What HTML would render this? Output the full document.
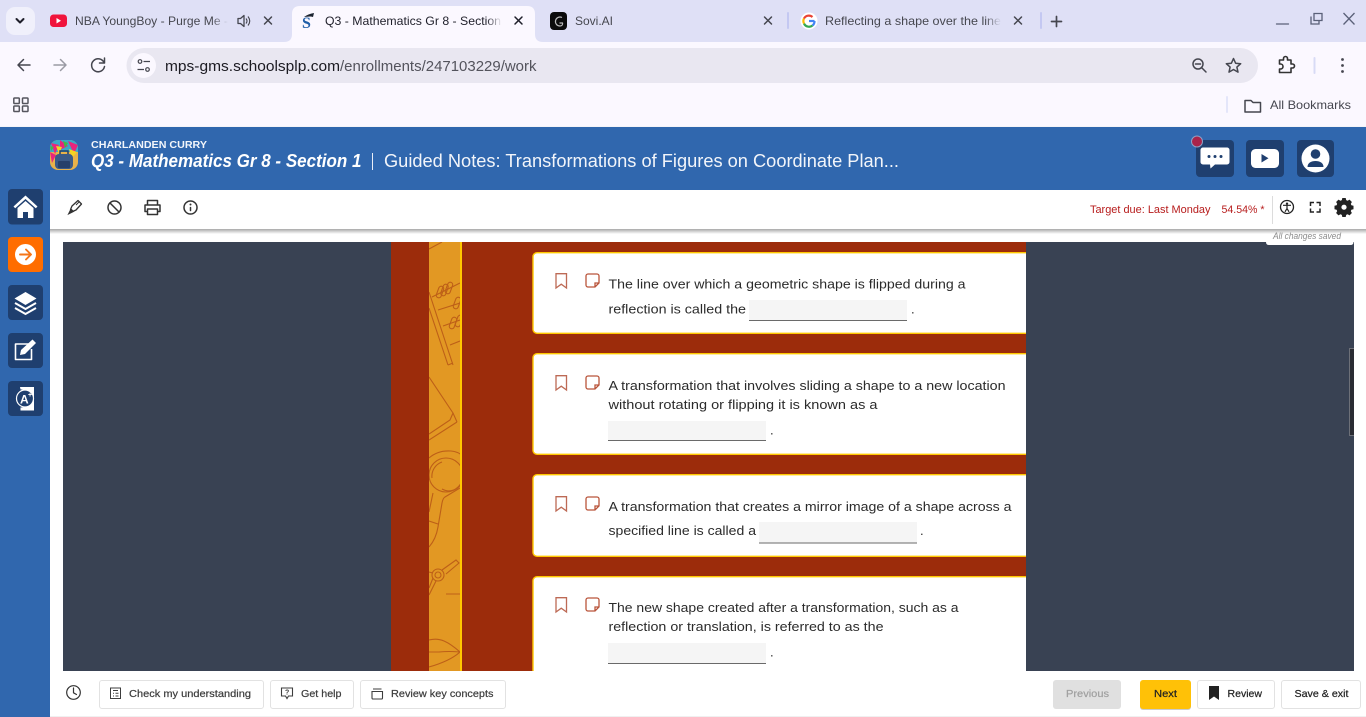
<!DOCTYPE html>
<html lang="en"><head><meta charset="utf-8"><title>Q3 - Mathematics Gr 8 - Section 1</title>
<style>
html,body{margin:0;padding:0;width:1366px;height:717px;overflow:hidden;background:#fff}
svg{display:block;position:absolute;left:0;top:0}
text{font-family:"Liberation Sans",Arial,sans-serif;white-space:pre}
.tab{font-size:12px;fill:#46474f}
.card{font-size:13px;fill:#2b2b2b}
.btn{font-size:10.5px;fill:#3d3d3d;stroke:#3d3d3d;stroke-width:.22}
.ic{fill:none;stroke:#45464f;stroke-width:1.5;stroke-linecap:round;stroke-linejoin:round}
.tb{fill:none;stroke:#333;stroke-width:1.5;stroke-linecap:round;stroke-linejoin:round}
.bb{fill:#fff;stroke:#e2e2e2;stroke-width:1}
.dec{fill:none;stroke:#bd5f18;stroke-width:1.100}
.bm{fill:none;stroke:#bd6a55;stroke-width:1.3}
.nt{fill:none;stroke:#b9543a;stroke-width:1.3}
.blank{fill:#f5f5f5}
.bl{stroke:#6a6a6a;stroke-width:1}
</style></head><body>
<svg width="1366" height="717" viewBox="0 0 1366 717" xmlns="http://www.w3.org/2000/svg">
<defs>
<linearGradient id="f1" x1="0" x2="1" y1="0" y2="0"><stop offset="0" stop-color="#dfe0f6" stop-opacity="0"/><stop offset="1" stop-color="#dfe0f6"/></linearGradient>
<linearGradient id="f2" x1="0" x2="1" y1="0" y2="0"><stop offset="0" stop-color="#fbf8ff" stop-opacity="0"/><stop offset="1" stop-color="#fbf8ff"/></linearGradient>
<linearGradient id="sh" x1="0" x2="0" y1="0" y2="1"><stop offset="0" stop-color="#a8a8a8"/><stop offset="1" stop-color="#fff"/></linearGradient>
<clipPath id="strip"><rect x="429" y="242" width="31" height="429"/></clipPath>
<clipPath id="av"><rect x="50" y="140" width="28" height="30" rx="8"/></clipPath>
</defs>

<!-- browser chrome -->
<rect width="1366" height="42" fill="#dfe0f6"/>
<rect y="42" width="1366" height="85" fill="#fbf8ff"/>
<rect x="6" y="7" width="29" height="28" rx="9" fill="#f0f0fb"/>
<path d="M16.500 19l3.500 3.500 3.500-3.500" fill="none" stroke="#1f1f2a" stroke-width="2" stroke-linecap="round" stroke-linejoin="round"/>
<rect x="50" y="14.500" width="17" height="12.500" rx="3.500" fill="#f0143c"/>
<path d="M56.500 18v5.500l4.500-2.750z" fill="#fff"/>
<text class="tab" x="75" y="25" textLength="153" lengthAdjust="spacingAndGlyphs">NBA YoungBoy - Purge Me -</text>
<rect x="212" y="10" width="16" height="22" fill="url(#f1)"/>
<path d="M238 18.500h2.500l3.500-3v11l-3.500-3H238z" fill="none" stroke="#45464f" stroke-width="1.300" stroke-linejoin="round"/>
<path d="M246 18.500q2 2.500 0 5M248 16.500q3.500 4.500 0 9" fill="none" stroke="#45464f" stroke-width="1.100"/>
<path d="M264.500 17l7 7M271.500 17l-7 7" class="ic"/>

<path d="M284 42Q292 42 292 34V14Q292 6 300 6H527Q535 6 535 14V34Q535 42 543 42Z" fill="#fbf8ff"/>
<path d="M304 17q4-3 10-4l-1 4c-3-1-6 0-9 0z" fill="#1c2430"/>
<text x="302" y="28" font-size="16" font-weight="bold" fill="#1f5ea8" style="font-family:'Liberation Serif',serif">S</text>
<text class="tab" x="325" y="25" textLength="176" lengthAdjust="spacingAndGlyphs" style="fill:#1f1f2a">Q3 - Mathematics Gr 8 - Section</text>
<rect x="486" y="10" width="16" height="22" fill="url(#f2)"/>
<path d="M515 17l7 7M522 17l-7 7" class="ic" style="stroke:#1f1f2a"/>

<rect x="550" y="12" width="17" height="18" rx="4" fill="#0b0b0b"/>
<path d="M562 17.500a4.500 4.500 0 1 0-2 8.500c2 0 3-1.500 2.500-3h-3" fill="none" stroke="#bbb" stroke-width="1.200"/>
<text class="tab" x="575" y="25" textLength="38" lengthAdjust="spacingAndGlyphs">Sovi.AI</text>
<path d="M764.500 17l7 7M771.500 17l-7 7" class="ic"/>
<rect x="787" y="12" width="2" height="17" rx="1" fill="#c4c8f2"/>

<circle cx="809" cy="21" r="8.500" fill="#fff"/>
<path d="M814.500 21h-5.500" stroke="#4285f4" stroke-width="2.200" fill="none"/>
<path d="M814.500 21a5.500 5.500 0 0 1-2 4.500" stroke="#4285f4" stroke-width="2.200" fill="none"/>
<path d="M812.500 25.500a5.500 5.500 0 0 1-8.500-2" stroke="#34a853" stroke-width="2.200" fill="none"/>
<path d="M804 23.500a5.500 5.500 0 0 1 0-5" stroke="#fbbc05" stroke-width="2.200" fill="none"/>
<path d="M804 18.500a5.500 5.500 0 0 1 8.500-1.500" stroke="#ea4335" stroke-width="2.200" fill="none"/>
<text class="tab" x="825" y="25" textLength="176" lengthAdjust="spacingAndGlyphs">Reflecting a shape over the line</text>
<rect x="985" y="10" width="16" height="22" fill="url(#f1)"/>
<path d="M1014.500 17l7 7M1021.500 17l-7 7" class="ic"/>
<rect x="1040" y="12" width="2" height="17" rx="1" fill="#c4c8f2"/>
<path d="M1056.500 16.500v10M1051.500 21.500h10" class="ic" style="stroke-width:1.700"/>
<path d="M1276.500 24h12" class="ic" style="stroke:#5a6078;stroke-width:1.300"/>
<path d="M1311 16.500v7.500h8v-3.500M1314 13.500h8v7h-8z" fill="none" stroke="#5a6078" stroke-width="1.300"/>
<path d="M1343.500 13l11 11.500M1354.500 13l-11 11.500" fill="none" stroke="#5a6078" stroke-width="1.300"/>

<!-- nav row -->
<path d="M30 65H18M23.500 59.500L18 65l5.500 5.500" class="ic"/>
<path d="M54 65h12M60.500 59.500L66 65l-5.500 5.500" class="ic" style="stroke:#9a9aa4"/>
<path d="M104 62.500a6.500 6.500 0 1 0 .5 4M104.500 58v5h-5" class="ic"/>
<rect x="126.500" y="48" width="1131.500" height="35" rx="17.500" fill="#e9e7f1"/>
<circle cx="143.500" cy="65.500" r="12.500" fill="#fbf8ff"/>
<circle cx="140" cy="61.500" r="1.800" fill="none" stroke="#45464f" stroke-width="1.200"/>
<path d="M143.500 61.500H150M137.500 69.500H144" stroke="#45464f" stroke-width="1.300" fill="none"/>
<circle cx="147.500" cy="69.500" r="1.800" fill="none" stroke="#45464f" stroke-width="1.200"/>
<text x="165" y="71" font-size="14.500" fill="#1c1b22" textLength="175" lengthAdjust="spacingAndGlyphs">mps-gms.schoolsplp.com</text>
<text x="340" y="71" font-size="14.500" fill="#53535c" textLength="196.500" lengthAdjust="spacingAndGlyphs">/enrollments/247103229/work</text>
<circle cx="1198" cy="64" r="5" class="ic"/><path d="M1201.500 67.500l4.500 4.500M1195.500 64h5" class="ic"/>
<path d="M1233.500 58.500l2.100 4.700 5.100.5-3.800 3.400 1.100 5-4.500-2.600-4.500 2.600 1.100-5-3.800-3.400 5.100-.5z" class="ic"/>
<path d="M1279.500 60h4v-1.500a2 2 0 0 1 4 0V60h3.500v4h1.500a2 2 0 0 1 0 4H1291v4.500h-11.500v-3.500h1a2 2 0 0 0 0-5h-1z" class="ic" style="stroke-width:1.600;stroke:#333"/>
<rect x="1313.500" y="57" width="2" height="17" rx="1" fill="#d8dbf6"/>
<circle cx="1342.500" cy="59.500" r="1.400" fill="#45464f"/><circle cx="1342.500" cy="65.500" r="1.400" fill="#45464f"/><circle cx="1342.500" cy="71.500" r="1.400" fill="#45464f"/>

<!-- bookmarks row -->
<g fill="none" stroke="#55555e" stroke-width="1.500"><rect x="13.800" y="98" width="5.500" height="5.500" rx=".8"/><rect x="22.500" y="98" width="5.500" height="5.500" rx=".8"/><rect x="13.800" y="106" width="5.500" height="5.500" rx=".8"/><rect x="22.500" y="106" width="5.500" height="5.500" rx=".8"/></g>
<rect x="1226" y="96" width="2" height="17" rx="1" fill="#e4e6fa"/>
<path d="M1245 100.500h6l2 2h7.500v9.500h-15.500z" fill="none" stroke="#45464f" stroke-width="1.500" stroke-linejoin="round"/>
<text x="1270" y="109" font-size="12" fill="#45464f" textLength="81" lengthAdjust="spacingAndGlyphs">All Bookmarks</text>

<!-- page -->
<rect y="126" width="1366" height="1" fill="#f4f4f8"/>
<rect y="127" width="1366" height="590" fill="#3067ae"/>
<rect x="50" y="190" width="1316" height="527" fill="#fff"/>

<!-- header -->
<g clip-path="url(#av)">
<rect x="50" y="140" width="28" height="30" fill="#e8b24a"/>
<rect x="50" y="140" width="28" height="12" fill="#3aa8c8"/>
<path d="M51 143l8 2-4 9zM60 140l8 6-8 4zM68 141l10 4-4 9zM50 152l6 3-4 8z" fill="#e9247c"/>
<path d="M56 146l6 1-3 7zM69 149l8 3-5 6z" fill="#f6d321"/>
<path d="M63 141l5 2-3 5zM50 146l4 1-3 4z" fill="#43b649"/>
<rect x="55" y="154" width="18" height="15" rx="4" fill="#3a5a88"/>
<rect x="58" y="161" width="12" height="7" rx="1" fill="#26406a"/>
<path d="M60 154v-3h8v3" fill="none" stroke="#26406a" stroke-width="1.500"/>
</g>
<text x="91" y="148" font-size="10.500" font-weight="bold" fill="#f3f6fb" textLength="116" lengthAdjust="spacingAndGlyphs">CHARLANDEN CURRY</text>
<text x="91" y="167" font-size="18" font-weight="bold" font-style="italic" fill="#fff" textLength="270.500" lengthAdjust="spacingAndGlyphs">Q3 - Mathematics Gr 8 - Section 1</text>
<rect x="372" y="153" width="1" height="17" fill="#e9eef7"/>
<text x="384" y="167" font-size="18" fill="#f2f5fa" textLength="515" lengthAdjust="spacingAndGlyphs">Guided Notes: Transformations of Figures on Coordinate Plan...</text>

<rect x="1196" y="140" width="38" height="37" rx="4" fill="#1f3f6f"/>
<path d="M1203 147.500h24a2.500 2.500 0 0 1 2.500 2.500v12a2.500 2.500 0 0 1-2.500 2.500h-12l-4.500 4-.5-4h-7a2.500 2.500 0 0 1-2.500-2.500v-12a2.500 2.500 0 0 1 2.500-2.500z" fill="#fff"/>
<circle cx="1209" cy="156.500" r="1.500" fill="#1f3f6f"/><circle cx="1215" cy="156.500" r="1.500" fill="#1f3f6f"/><circle cx="1221" cy="156.500" r="1.500" fill="#1f3f6f"/>
<circle cx="1197" cy="141.500" r="5.500" fill="#a9234a" stroke="#8ea0c4" stroke-width="1"/>
<rect x="1246" y="140" width="38" height="37" rx="4" fill="#1f3f6f"/>
<rect x="1251" y="149" width="28" height="19" rx="4.500" fill="#fff"/>
<path d="M1261.500 154v8.500l7-4.250z" fill="#1f3f6f"/>
<rect x="1297" y="140" width="37" height="37" rx="4" fill="#1f3f6f"/>
<circle cx="1315.500" cy="158.500" r="14" fill="#fff"/>
<circle cx="1315.500" cy="154" r="4.800" fill="#1f3f6f"/>
<path d="M1307.500 167c0-4 3.500-6 8-6s8 2 8 6z" fill="#1f3f6f"/>

<!-- sidebar -->
<rect x="8" y="189" width="35" height="35.500" rx="4" fill="#1f3f6f"/>
<path d="M25.500 195.500L13.500 206.500l1.700 1.800 10.300-9.300 10.300 9.300 1.700-1.800z" fill="#fff"/>
<path d="M17.500 208l8-7 8 7v10h-5.500v-6h-5v6h-5.500z" fill="#fff"/>
<rect x="8" y="237" width="35" height="35" rx="4" fill="#ff6d00"/>
<circle cx="25.500" cy="254.500" r="10.500" fill="#fff"/>
<path d="M20 254.500h10.500M26 249.500l5 5-5 5" fill="none" stroke="#f5761a" stroke-width="1.900" stroke-linecap="round" stroke-linejoin="round"/>
<rect x="8" y="285" width="35" height="35" rx="4" fill="#1f3f6f"/>
<path d="M25.500 292l11 6.500-11 6.500-11-6.500z" fill="#fff"/>
<path d="M15 303l10.500 6 10.500-6M15 308l10.500 6 10.500-6" fill="none" stroke="#fff" stroke-width="2"/>
<rect x="8" y="333" width="35" height="35" rx="4" fill="#1f3f6f"/>
<path d="M29 344h-13.500v15.500h16V349" fill="none" stroke="#fff" stroke-width="1.600" stroke-linejoin="round"/>
<path d="M20 355l1-5 11.500-10.500 3.500 3.500-11 11z" fill="#fff"/>
<rect x="8" y="381" width="35" height="35" rx="4" fill="#1f3f6f"/>
<path d="M20 387h14v23.500H20.500v-3a9 9 0 0 0 0-18z" fill="#fff"/>
<circle cx="25" cy="398.500" r="8.500" fill="#1f3f6f" stroke="#fff" stroke-width="1.200"/>
<text x="20" y="403.500" font-size="12" font-weight="bold" fill="#fff">A</text>
<text x="28" y="397" font-size="7" font-weight="bold" fill="#fff">+</text>

<!-- toolbar -->
<rect x="50" y="229" width="1316" height="5" fill="url(#sh)"/>
<path d="M72.500 211.500l-2-2 1.500-3.500 6-5.500 3.500 3.500-5.500 6z" fill="none" stroke="#333" stroke-width="1.300" stroke-linejoin="round"/>
<path d="M76 205l3-3M71 209l-2.500 5 5-2.500z" fill="#333" stroke="#333" stroke-width="1"/>
<circle cx="114.500" cy="207.500" r="6.500" class="tb"/><path d="M110 203l9 9" class="tb"/>
<path d="M147.500 205v-4.500h10v4.500M147.500 211.500h-2.500v-6.500h15v6.500h-2.500M147.500 209h10v5.500h-10z" class="tb"/>
<circle cx="190.500" cy="207.500" r="6.500" class="tb"/>
<path d="M190.500 207.500v3" class="tb"/><circle cx="190.500" cy="204.500" r="1" fill="#333"/>
<text x="1090" y="213" font-size="10.700" fill="#b71c1c" textLength="120.500" lengthAdjust="spacingAndGlyphs">Target due: Last Monday</text>
<text x="1221.500" y="213" font-size="10.700" fill="#b71c1c" textLength="43" lengthAdjust="spacingAndGlyphs">54.54% *</text>
<rect x="1272" y="196" width="1" height="28" fill="#dcdcdc"/>
<circle cx="1287" cy="207" r="6.500" fill="none" stroke="#222" stroke-width="1.300"/>
<circle cx="1287" cy="203.700" r="1.200" fill="#222"/>
<path d="M1283 205.300h8M1287 205.300v3.200l-2 3.300M1287 208.500l2 3.300" fill="none" stroke="#222" stroke-width="1.200"/>
<path d="M1310.500 206v-3.500h3.500M1316.500 202.500h3.500v3.500M1320 208.500v3.500h-3.500M1314 212h-3.500v-3.500" fill="none" stroke="#222" stroke-width="1.500"/>
<path d="M1342.300 199.500h3.400l.5 2.100 1.400.6 1.900-1.100 2.400 2.400-1.100 1.900.6 1.400 2.100.5v3.400l-2.100.5-.6 1.400 1.100 1.900-2.400 2.400-1.900-1.100-1.400.6-.5 2.100h-3.400l-.5-2.100-1.400-.6-1.900 1.100-2.400-2.400 1.100-1.900-.6-1.400-2.100-.5v-3.400l2.100-.5.6-1.400-1.100-1.900 2.400-2.400 1.900 1.100 1.400-.6z" fill="#222" transform="translate(0 -1.500)"/>
<circle cx="1344" cy="207.200" r="2.600" fill="#fff"/>

<!-- content -->
<rect x="63" y="242" width="1291" height="429" fill="#394253"/>
<rect x="391" y="242" width="635" height="429" fill="#9c2c0b"/>
<rect x="429" y="242" width="31" height="429" fill="#e29823"/>
<rect x="460" y="242" width="2" height="429" fill="#ffc800"/>
<g clip-path="url(#strip)" class="dec">
<path d="M429 249l13-7M429 292l24 73M429 308l19 57M448 365l5-2M432 297l28-14M438 310l22-7M443 326l17-6M450 345l10-4"/>
<rect x="-2.500" y="-6" width="5" height="12" rx="2.500" transform="translate(440 292) rotate(20)"/>
<rect x="-2.500" y="-6" width="5" height="12" rx="2.500" transform="translate(444.500 290) rotate(20)"/>
<rect x="-2.500" y="-6" width="5" height="12" rx="2.500" transform="translate(449 288) rotate(20)"/>
<rect x="-2.500" y="-6" width="5" height="12" rx="2.500" transform="translate(457 303) rotate(20)"/>
<rect x="-2.500" y="-6" width="5" height="12" rx="2.500" transform="translate(453 323) rotate(20)"/>
<rect x="-2.500" y="-6" width="5" height="12" rx="2.500" transform="translate(459 321) rotate(20)"/>
<path d="M429 377l24 36-3 7-21 14M457 422l-28 18M453 413l4 9"/>
<path d="M429 458q9-8 22-7 9 1 12 6"/>
<circle cx="446" cy="475" r="17"/><path d="M432 478a15 15 0 0 1 10-16M462 482a14 14 0 0 1-20 7"/>
<path d="M460 488l-15 9q-2 1-3 6l-4 24q-2 12-9 20M433 493l-4 19M429 521l9 3"/>
<circle cx="438" cy="575" r="6"/><circle cx="438" cy="575" r="3"/>
<path d="M442 570l14-10 3 3-13 11M436 581l-7 14M433 578l-4 10M429 572l4 1M446 594h14"/>
<path d="M429 640q8-2 15 1t16 11q-10 9-31 15M429 652h10q10-1 21 0"/>
</g>

<!-- cards -->
<g fill="#fff" stroke="#ffc800" stroke-width="1.400">
<path d="M1030 252.700H537a4 4 0 0 0-4 4V329a4 4 0 0 0 4 4.300h493z"/>
<path d="M1030 353.700H537a4 4 0 0 0-4 4V450a4 4 0 0 0 4 4.300h493z"/>
<path d="M1030 474.700H537a4 4 0 0 0-4 4V552a4 4 0 0 0 4 4.300h493z"/>
<path d="M1030 576.700H537a4 4 0 0 0-4 4V672h497z"/>
</g>
<rect x="1026" y="242" width="328" height="429" fill="#394253"/>
<g><path class="bm" d="M556 273.700h10.500V288l-5.250-3.800L556 288z"/><path class="nt" d="M599 283v-7a2 2 0 0 0-2-2h-9a2 2 0 0 0-2 2v9a2 2 0 0 0 2 2h7zM599 283h-4v4"/></g>
<g transform="translate(0 102)"><path class="bm" d="M556 273.700h10.500V288l-5.250-3.800L556 288z"/><path class="nt" d="M599 283v-7a2 2 0 0 0-2-2h-9a2 2 0 0 0-2 2v9a2 2 0 0 0 2 2h7zM599 283h-4v4"/></g>
<g transform="translate(0 223)"><path class="bm" d="M556 273.700h10.500V288l-5.250-3.800L556 288z"/><path class="nt" d="M599 283v-7a2 2 0 0 0-2-2h-9a2 2 0 0 0-2 2v9a2 2 0 0 0 2 2h7zM599 283h-4v4"/></g>
<g transform="translate(0 324)"><path class="bm" d="M556 273.700h10.500V288l-5.250-3.800L556 288z"/><path class="nt" d="M599 283v-7a2 2 0 0 0-2-2h-9a2 2 0 0 0-2 2v9a2 2 0 0 0 2 2h7zM599 283h-4v4"/></g>

<text class="card" x="608.500" y="288.500" textLength="357" lengthAdjust="spacingAndGlyphs">The line over which a geometric shape is flipped during a</text>
<text class="card" x="608.500" y="313.500" textLength="137.500" lengthAdjust="spacingAndGlyphs">reflection is called the</text>
<rect class="blank" x="749" y="300" width="158" height="20.500"/><path class="bl" d="M749 320.500h158"/>
<text class="card" x="911" y="313.500">.</text>

<text class="card" x="608.500" y="390" textLength="397" lengthAdjust="spacingAndGlyphs">A transformation that involves sliding a shape to a new location</text>
<text class="card" x="608.500" y="409" textLength="269" lengthAdjust="spacingAndGlyphs">without rotating or flipping it is known as a</text>
<rect class="blank" x="608" y="421" width="158" height="19.500"/><path class="bl" d="M608 440.500h158"/>
<text class="card" x="770" y="434.500">.</text>

<text class="card" x="608.500" y="511" textLength="403" lengthAdjust="spacingAndGlyphs">A transformation that creates a mirror image of a shape across a</text>
<text class="card" x="608.500" y="535" textLength="147.500" lengthAdjust="spacingAndGlyphs">specified line is called a</text>
<rect class="blank" x="759" y="522" width="158" height="21"/><path class="bl" d="M759 543h158"/>
<text class="card" x="920" y="535">.</text>

<text class="card" x="608.500" y="612" textLength="350" lengthAdjust="spacingAndGlyphs">The new shape created after a transformation, such as a</text>
<text class="card" x="608.500" y="631" textLength="275" lengthAdjust="spacingAndGlyphs">reflection or translation, is referred to as the</text>
<rect class="blank" x="608" y="643" width="158" height="20"/><path class="bl" d="M608 663.500h158"/>
<text class="card" x="770" y="656.500">.</text>

<!-- scroll handle -->
<rect x="1349.500" y="348.500" width="5" height="87" fill="#2a2c33" stroke="#6d7078" stroke-width="1"/>
<rect x="1354" y="240" width="12" height="431" fill="#fff"/>

<!-- saved tab -->
<path d="M1266 234h87.500v8q0 3-3 3h-81.500q-3 0-3-3z" fill="#fff"/>
<text x="1273" y="239" font-size="8.800" font-style="italic" fill="#8a8a8a" textLength="68" lengthAdjust="spacingAndGlyphs">All changes saved</text>

<!-- bottom bar -->
<rect x="50" y="671" width="1316" height="46" fill="#fff"/>
<rect x="50" y="716" width="1316" height="1" fill="#f0f0f0"/>
<circle cx="73.500" cy="692.500" r="6.800" class="tb" style="stroke-width:1.200"/><path d="M73.500 688v4.800l3 1.700" class="tb" style="stroke-width:1.200"/>
<rect class="bb" x="99.500" y="680.500" width="164" height="28" rx="2.500"/>
<rect class="bb" x="270.500" y="680.500" width="83" height="28" rx="2.500"/>
<rect class="bb" x="360.500" y="680.500" width="145" height="28" rx="2.500"/>
<path d="M110.500 688h10v10.500h-10zM113 690.500h5M113 693.200h1M115.500 693.200h3M113 696h1M115.500 696h3" fill="none" stroke="#3d3d3d" stroke-width="1"/>
<text class="btn" x="129" y="697" textLength="122" lengthAdjust="spacingAndGlyphs">Check my understanding</text>
<path d="M281.500 688h11v8h-4l-1.500 2.500-1.500-2.500h-4z" fill="none" stroke="#3d3d3d" stroke-width="1.100"/>
<text x="285" y="694.500" font-size="7" font-weight="bold" fill="#3d3d3d">?</text>
<text class="btn" x="301" y="697" textLength="40.500" lengthAdjust="spacingAndGlyphs">Get help</text>
<path d="M372 691.500h10.500v6.500a1 1 0 0 1-1 1H373a1 1 0 0 1-1-1zM373 689h8.500" fill="none" stroke="#3d3d3d" stroke-width="1.100"/>
<text class="btn" x="391" y="697" textLength="102.500" lengthAdjust="spacingAndGlyphs">Review key concepts</text>
<rect x="1053" y="680" width="68" height="29" rx="3" fill="#e0e0e0"/>
<text class="btn" x="1066" y="697" textLength="43" lengthAdjust="spacingAndGlyphs" style="fill:#a0a0a0;stroke:#a0a0a0">Previous</text>
<rect x="1140" y="681" width="51" height="29" rx="3" fill="#a9a9a9" opacity=".6"/>
<rect x="1140" y="680" width="51" height="29" rx="3" fill="#ffc107"/>
<text class="btn" x="1154" y="697" textLength="23" lengthAdjust="spacingAndGlyphs" style="fill:#222;stroke:#222">Next</text>
<rect class="bb" x="1197.500" y="680.500" width="77" height="28" rx="2.500"/>
<path d="M1209 686h10v14l-5-3.500-5 3.500z" fill="#222"/>
<text class="btn" x="1227.500" y="697" textLength="34.500" lengthAdjust="spacingAndGlyphs" style="fill:#222;stroke:#222">Review</text>
<rect class="bb" x="1281.500" y="680.500" width="79" height="28" rx="2.500"/>
<text class="btn" x="1294.500" y="697" textLength="54" lengthAdjust="spacingAndGlyphs" style="fill:#222;stroke:#222">Save &amp; exit</text>
</svg>
</body></html>
